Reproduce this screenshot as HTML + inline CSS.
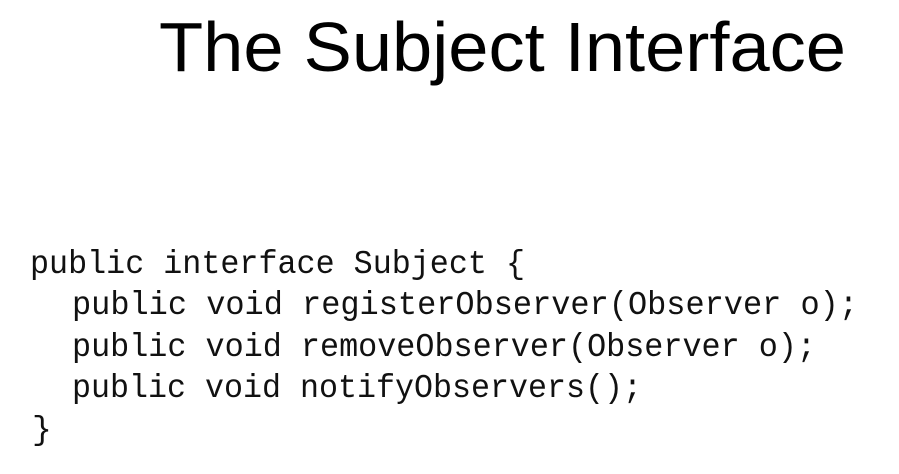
<!DOCTYPE html>
<html><head><style>html,body{margin:0;padding:0;background:#fff;width:899px;height:474px;overflow:hidden}</style></head>
<body>
<svg width="899" height="474" xmlns="http://www.w3.org/2000/svg">
<text x="159" y="71" font-family="Liberation Sans, Arial, sans-serif" font-size="70" fill="#000" textLength="687" lengthAdjust="spacingAndGlyphs">The Subject Interface</text>
<g font-family="Liberation Mono, monospace" font-size="33" fill="#111">
<text x="30" y="273" textLength="495" lengthAdjust="spacingAndGlyphs">public interface Subject {</text>
<text x="72" y="314" textLength="786" lengthAdjust="spacingAndGlyphs">public void registerObserver(Observer o);</text>
<text x="72" y="356" textLength="744" lengthAdjust="spacingAndGlyphs">public void removeObserver(Observer o);</text>
<text x="72" y="397" textLength="570" lengthAdjust="spacingAndGlyphs">public void notifyObservers();</text>
<text x="32" y="439">}</text>
</g>
</svg>
</body></html>
